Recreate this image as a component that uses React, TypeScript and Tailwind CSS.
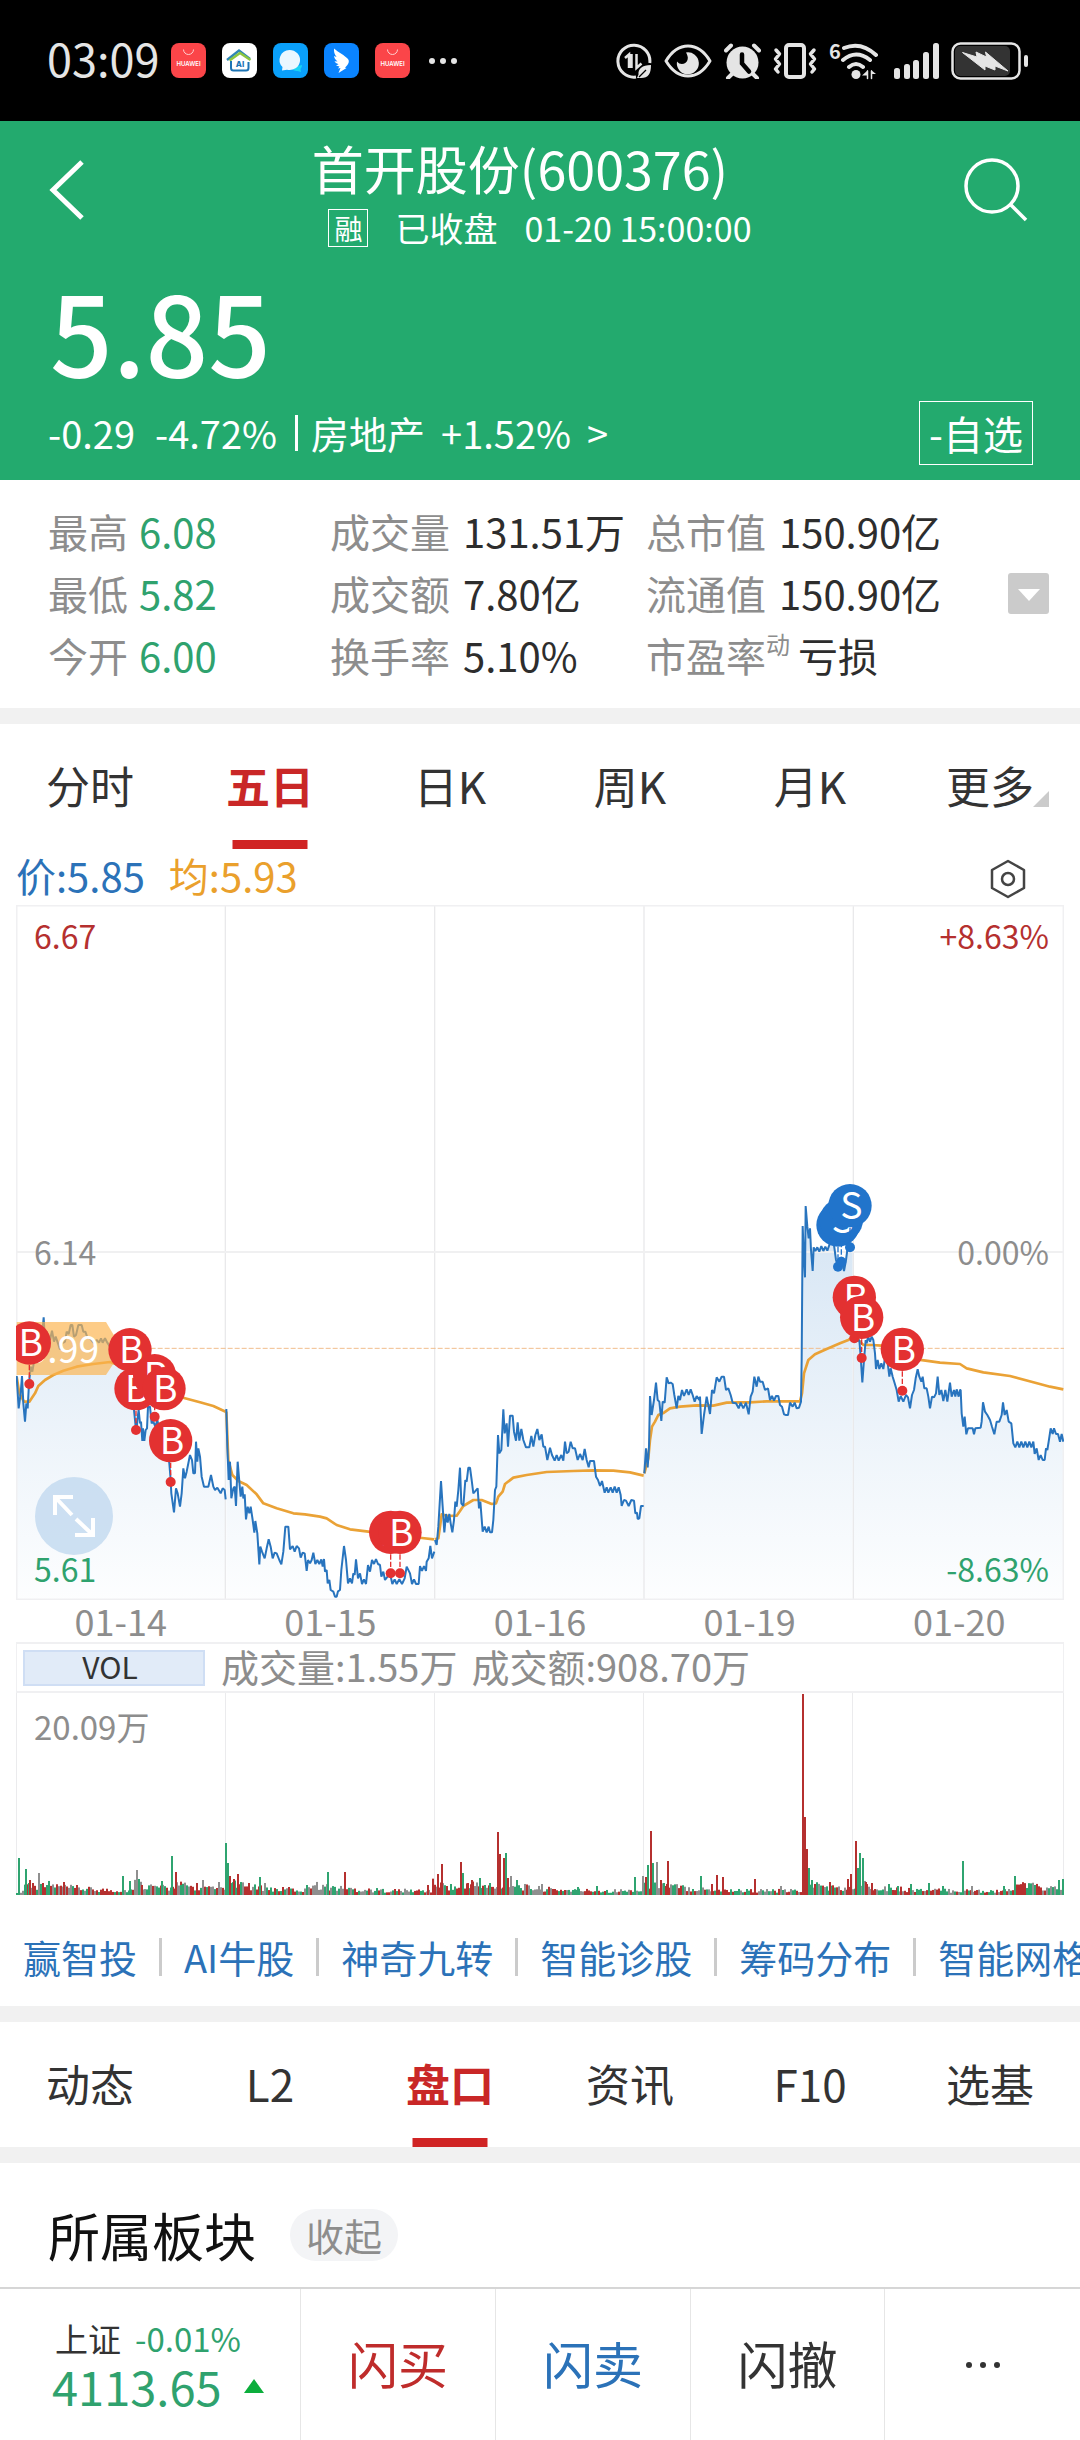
import React from "react";

type Segment = { dx: number; dy: number; pts: string };

/* Price chart space: 3144 x 2085 units, three per CSS pixel. */
const W = 3144;
const H = 2085;

const A = { dx: -48, dy: 1065 };
const B = { dx: 1032, dy: 1425 };
const C = { dx: 2052, dy: 765 };

const priceDays: Segment[][] = [
  [
    {
      ...A,
      pts: "50,348 56,445 62,400 66,348 70,430 75,485 79,430 83,445 87,370 92,320 97,335 103,300 110,290 115,260 122,270 126,230 131,172 134,230 140,215 150,240 156,212 162,245 167,230 174,250 180,268 186,250 195,245 200,215 206,222 212,195 217,195 222,230 228,225 235,195 245,195 250,215 256,215 262,232 270,235 280,248 290,240 297,248 303,235 308,248 315,235 322,248 330,260 345,280 360,270 375,300 390,320 398,350 402,450 405,480 409,520 412,480 416,450 420,490 423,485 427,543 429,505 433,543 437,510 441,505 444,440 450,440 455,490 460,485 466,500 472,480 480,520 490,500 500,560 508,610 512,660 514,700 522,757 528,685 533,700 540,740 545,700 550,625 555,655 560,635 570,585 576,600 580,640 585,640 588,545 592,605 595,565 600,590 605,650 612,680 625,680 633,645 640,680 645,690 652,683 662,700 668,685 674,690 677,718",
    },
  ],
  [
    {
      ...A,
      pts: "679,447 682,560 686,660 690,605 694,715 700,685 704,680 708,738 713,605 718,665 722,710 727,680 730,715 734,703 738,778 743,740 748,760 752,740 758,780 763,818 766,783 772,820 778,913 781,860 786,875 794,895 800,865 806,838 812,860 818,895 824,878 830,880 838,900 844,913 850,875 856,800 865,800 870,868 878,858 884,875 890,858 897,865 902,893 908,878 914,880 920,933 924,900 930,910 935,900 940,878 946,912 952,900 958,912 964,898 968,920 972,897 975,935 980,930 983,970 988,960 992,990 1000,995 1005,1010 1010,1010 1014,994 1020,990 1024,930 1032,858 1038,900 1044,970 1050,955 1056,970 1060,940 1064,945 1068,898 1074,955 1080,940 1086,972 1092,958 1098,972 1104,915 1110,935 1116,900 1122,912 1128,897 1134,912 1140,915 1144,950 1150,935 1155,960 1170,940 1177,972 1184,958 1190,972 1198,958 1206,972 1214,955 1220,920 1230,940 1236,972 1242,958 1248,972 1256,972 1260,918 1266,933 1272,918 1278,933 1280,905 1286,895 1291,858 1296,895 1303,875",
    },
  ],
  [
    {
      ...B,
      pts: "225,480 230,495 235,440 243,303 248,380 253,457 258,402 263,428 268,402 272,430 277,457 282,420 286,365 290,380 295,330 300,263 304,370 310,378 316,300 320,305 325,263 330,263 335,300 340,340 353,325 357,385 361,365 368,455 374,440 380,457 386,440 390,457 396,457 400,420 405,330 409,320 414,165 418,220 424,210 430,88 434,160 440,130 444,200 450,107 458,107 462,155 468,182 473,127 478,182 484,147 490,180 498,202 508,202 514,168 520,200 526,165 532,147 538,180 545,163 550,200 555,200 562,240 570,203 576,225 584,242 590,225 596,242 604,225 610,242 615,185 620,220 626,215 632,185 638,205 645,205 653,240 660,222 668,240 674,207 680,240 686,262 690,243 702,243 708,290 714,300 720,318 726,303 734,338 740,322 745,338 752,322 758,338 764,320 770,338 776,322 782,345 785,378 792,360 798,362 806,378 814,360 822,362 826,400 831,398 833,417 838,415 843,378 851,378",
    },
  ],
  [
    {
      ...B,
      pts: "853,280 858,205 863,262 867,200 870,48 875,105 882,60 888,8 893,60 898,65 904,123 908,65 914,68 920,-8 926,10 932,8 938,12 943,45 950,85 955,48 960,60 966,30 972,48 980,28 986,45 992,28 998,45 1004,65 1010,48 1018,60",
    },
    {
      ...C,
      pts: "0,710 5,822 12,765 20,710 30,762 36,690 42,700 50,652 58,665 65,650 72,650 78,690 85,685 92,705 98,728 108,730 116,745 122,728 130,745 138,728 146,763 152,710 158,695 163,650 170,680 175,650 180,665 188,665 195,690 204,685 210,720 216,708 222,722 228,708 235,708 240,735 246,740 252,763 258,765 264,765 270,728 278,740 284,728 290,745 297,743 303,725 305,600 308,198 312,300 315,352 317,138 322,200 326,235 330,205 333,270 338,333 341,262 346,273 352,262 358,275 364,258 370,273 376,260 382,272 388,255 395,240 402,255 408,300 414,320 420,320 426,300 432,333 438,300 443,262 450,255 458,262",
    },
  ],
  [
    {
      ...C,
      pts: "460,520 466,545 478,540 482,590 487,667 492,600 497,540 500,550 504,530 510,545 515,530 520,540 525,580 528,627 533,600 538,627 544,610 550,627 556,585 562,600 568,650 572,625 578,650 584,670 590,690 596,725 602,708 610,725 618,705 624,712 630,745 636,705 642,690 647,655 653,628 658,650 664,665 668,650 673,685 680,685 685,710 690,745 696,710 702,712 708,700 713,650 718,705 724,690 730,723 736,690 742,725 750,668 755,710 762,690 766,710 770,688 776,710 780,690 782,690 785,760 790,800 794,770 799,823 804,805 818,805 822,823 826,805 842,803 845,785 849,727 855,755 862,765 870,780 876,800 883,823 890,785 898,785 905,765 909,727 914,765 920,750 926,785 934,790 940,850 946,862 952,845 958,862 964,845 970,862 976,845 982,862 988,845 994,862 1000,845 1004,882 1010,865 1016,900 1022,885 1028,900 1034,900 1038,865 1042,870 1046,845 1052,805 1058,822 1062,805 1068,822 1074,822 1080,845 1085,822 1090,845",
    },
  ],
];

const averageDays: Segment[][] = [
  [{ ...A, pts: "50,350 58,400 72,425 88,425 105,400 115,378 135,360 160,345 190,332 230,320 280,312 330,306 400,330 450,370 500,400 555,415 600,427 640,438 677,455" }],
  [{ ...A, pts: "679,455 685,600 697,645 715,663 740,675 770,703 790,730 830,745 880,760 915,763 960,770 980,775 1010,795 1050,808 1105,815 1180,825 1266,834 1302,838" }],
  [{ ...B, pts: "225,478 235,475 240,440 245,403 265,408 290,407 300,393 310,378 340,360 365,360 395,372 408,370 415,350 428,335 435,312 460,293 500,285 560,276 640,273 700,271 760,272 810,277 851,287" }],
  [
    { ...B, pts: "853,280 865,235 870,180 876,140 885,125 895,105 912,98 930,85 960,80 1010,76" },
    { ...C, pts: "40,737 80,728 120,727 150,727 200,724 300,724 306,700 312,640 325,600 345,583 380,567 420,550 445,540 458,530" },
  ],
  [{ ...C, pts: "460,525 480,545 490,555 515,555 545,557 600,585 650,598 720,608 780,612 800,625 850,637 930,648 1000,667 1050,680 1090,688" }],
];

const toPoints = (day: Segment[]): [number, number][] =>
  day.flatMap((s) =>
    s.pts.split(" ").map((p) => {
      const [x, y] = p.split(",").map(Number);
      return [x + s.dx, y + s.dy] as [number, number];
    }),
  );

const linePath = (pts: [number, number][]) => "M" + pts.map((p) => p.join(" ")).join("L");
const areaPath = (pts: [number, number][]) =>
  `${linePath(pts)}L${pts[pts.length - 1][0]} ${H}L${pts[0][0]} ${H}Z`;

type Mark = { x: number; y: number; t: "B" | "S"; dotY?: number };

const marks: Mark[] = [
  { x: 40, y: 1314, t: "B", dotY: 1437 },
  { x: 342, y: 1334, t: "B" },
  { x: 360, y: 1451, t: "B", dotY: 1575 },
  { x: 416, y: 1412, t: "B", dotY: 1535 },
  { x: 444, y: 1451, t: "B" },
  { x: 464, y: 1607, t: "B", dotY: 1731 },
  { x: 1124, y: 1882, t: "B", dotY: 2005 },
  { x: 1152, y: 1882, t: "B", dotY: 2005 },
  { x: 2466, y: 960, t: "S", dotY: 1085 },
  { x: 2476, y: 945, t: "S", dotY: 1070 },
  { x: 2502, y: 902, t: "S", dotY: 1027 },
  { x: 2515, y: 1177, t: "B", dotY: 1300 },
  { x: 2537, y: 1237, t: "B", dotY: 1359 },
  { x: 2659, y: 1333, t: "B", dotY: 1457 },
];

function PriceChart() {
  const red = "#e33131";
  const blue = "#2174cb";
  const cols = [628, 1256, 1884, 2512];
  return (
    <svg viewBox={`0 0 ${W} ${H}`} className="block h-auto w-full overflow-hidden" role="img" aria-label="五日走势图">
      <defs>
        <linearGradient id="area" gradientUnits="userSpaceOnUse" x1="0" y1="900" x2="0" y2={H}>
          <stop offset="0" stopColor="#2a7ac6" stopOpacity="0.2" />
          <stop offset="0.6" stopColor="#2a7ac6" stopOpacity="0.08" />
          <stop offset="1" stopColor="#2a7ac6" stopOpacity="0.01" />
        </linearGradient>
      </defs>
      {priceDays.map((d, i) => (
        <path key={i} d={areaPath(toPoints(d))} fill="url(#area)" />
      ))}
      <g stroke="#e9e9eb" strokeWidth="4" fill="none">
        {cols.map((x) => (
          <path key={x} d={`M${x} 0V${H}`} />
        ))}
        <path d={`M0 1041H${W}`} stroke="#f0f0f1" strokeWidth="6" />
        <rect x="2" y="2" width={W - 4} height={H - 4} stroke="#f0f0f2" strokeWidth="5" />
      </g>
      <path d={`M320 1330H${W}`} stroke="#f1bd8c" strokeWidth="3" strokeDasharray="15 6" />
      {averageDays.map((d, i) => (
        <path key={i} d={linePath(toPoints(d))} fill="none" stroke="#eaa236" strokeWidth="8" strokeLinejoin="round" />
      ))}
      {priceDays.map((d, i) => (
        <path key={i} d={linePath(toPoints(d))} fill="none" stroke="#2874be" strokeWidth="6" strokeLinejoin="bevel" />
      ))}
      <path d="M2 1251H270L295 1293V1372L270 1410H2Z" fill="#fcb44e" fillOpacity="0.68" />
      <text x="32" y="1375" fontSize="112" fill="#fff">
        5.99
      </text>
      {marks.map((m, i) => {
        const color = m.t === "B" ? red : blue;
        return (
          <g key={i}>
            {m.dotY && (
              <>
                <path d={`M${m.x} ${m.y}V${m.dotY}`} stroke={color} strokeWidth="4" strokeDasharray="16 6" />
                <circle cx={m.x} cy={m.dotY} r="15" fill={color} />
              </>
            )}
            <circle cx={m.x} cy={m.y} r="65" fill={color} />
            <text x={m.x + 4} y={m.y + 40} fontSize="112" textAnchor="middle" fill="#fff">
              {m.t}
            </text>
          </g>
        );
      })}
    </svg>
  );
}

const GREEN = "#2fa470";
const RED = "#b5302f";
const GREY = "#8f8f8f";

const spikes: [number, number, string][] = (
  "18,37,g 25,26,g 29,15,r 32,12,r 38,22,e 42,12,r 63,13,r 76,10,r 122,19,g 129,14,g 136,25,e 138,16,g 141,10,r 161,14,g 171,39,g 175,23,r 180,10,g 196,12,r 202,15,e 218,13,e 225,52,g 227,32,g 229,19,r 233,16,r 237,21,r 248,12,r 259,18,g 264,12,e 282,8,r 288,8,r 306,10,g 327,23,g 344,23,r 427,10,r 437,21,r 441,31,r 446,9,r 460,33,r 462,22,g 467,12,r 471,15,r 479,17,g 484,10,g 489,12,g 497,63,r 499,41,r 503,37,r 505,42,g 507,17,r 510,19,e 516,15,g 541,11,e 577,8,g 596,9,g 634,18,g 642,19,e 645,18,r 647,30,g 650,64,r 652,32,g 656,33,e 660,15,r 663,12,g 667,34,r 700,19,g 711,11,r 716,20,r 722,18,r 754,16,r 780,9,e 802,201,r 804,78,r 806,46,r 808,27,g 811,15,g 814,11,r 829,13,r 847,16,r 850,21,r 855,54,r 857,27,g 859,42,g 862,37,g 865,13,r 871,12,r 888,11,g 897,9,g 910,11,g 928,12,g 942,9,g 962,34,g 971,9,e 1003,9,g 1014,19,g 1034,10,g 1058,15,g 1062,16,g"
)
  .split(" ")
  .map((s) => {
    const [x, h, c] = s.split(",");
    return [Number(x) - 16, Number(h), c === "g" ? GREEN : c === "r" ? RED : GREY];
  });

const busy = [8, 25, 118, 155, 212, 290, 415, 450, 485, 625, 640, 790, 840, 1000];

/* Small per-minute bars between the large ones, tallest near busy minutes. */
const noise: [number, number, string][] = Array.from({ length: 524 }, (_, i) => {
  const x = i * 2;
  const r = Math.abs(Math.sin(i * 12.9898) * 43758.5453) % 1;
  const q = Math.abs(Math.sin(i * 78.233) * 12543.123) % 1;
  const lift = busy.reduce((m, b) => (x >= b ? Math.max(m, 11 * Math.exp(-(x - b) / 30)) : m), 0);
  return [x, 2 + r * 4 + lift * (0.4 + r * 0.6), q < 0.36 ? GREEN : q < 0.68 ? RED : GREY];
});

function VolumeChart() {
  return (
    <svg viewBox="0 0 1048 202" className="block h-auto w-full" role="img" aria-label="成交量图">
      <g fill="#ebebed">
        {[0, 209, 418, 627, 836, 1047].map((x) => (
          <rect key={x} x={x} y="0" width="1" height="202" />
        ))}
      </g>
      {noise.map(([x, h, c], i) => (
        <rect key={i} x={x} y={202 - h} width="2" height={h} fill={c} />
      ))}
      {spikes.map(([x, h, c], i) => (
        <rect key={i} x={x} y={202 - h} width="2" height={h} fill={c} />
      ))}
    </svg>
  );
}

function HuaweiIcon() {
  return (
    <svg viewBox="0 0 35 35" className="size-[35px]" aria-hidden="true">
      <rect width="35" height="35" rx="8" fill="#fb4549" />
      <path d="M12.500 6.500a5 5 0 0 0 10 0" fill="none" stroke="#ffd0d0" strokeWidth="1" />
      <text x="17.500" y="23" fontSize="6" fontWeight="600" textAnchor="middle" fill="#fff" fontFamily="Inter, sans-serif">
        HUAWEI
      </text>
    </svg>
  );
}

function StatusBar() {
  const c = "#e5e5e5";
  return (
    <div className="flex h-[121px] items-center justify-between bg-black pl-[47px] pr-[52px] text-[#e5e5e5]">
      <div className="flex items-center gap-4">
        <span className="-mr-1 pb-[5px] text-[45px] leading-[50px]">03:09</span>
        <HuaweiIcon />
        <svg viewBox="0 0 35 35" className="size-[35px]" aria-hidden="true">
          <rect width="35" height="35" rx="8" fill="#fff" />
          <path d="M5 17 17 7.500 28 16" fill="none" stroke="#2f86b5" strokeWidth="2.500" />
          <path d="M7.500 17.500 18 10l10.500 7" fill="none" stroke="#8cc63f" strokeWidth="2.500" />
          <path d="M9 18v7q0 2.500 2.500 2.500H24q2.500 0 2.500-2.500v-6" fill="none" stroke="#1d74b4" strokeWidth="2" />
          <text x="18" y="24" fontSize="8" fontWeight="800" textAnchor="middle" fill="#1d74b4" fontFamily="Inter, sans-serif">
            AI
          </text>
        </svg>
        <svg viewBox="0 0 35 35" className="size-[35px]" aria-hidden="true">
          <rect width="35" height="35" rx="8" fill="#0aa0fb" />
          <path d="M29 22a5.500 5.500 0 0 1-1.500 4l.5 3-3.500-1a6 6 0 0 1-6-3.500z" fill="#18d3f5" />
          <path d="M16.500 7a10.500 10 0 1 1-2.500 19.700L9 27.500l.5-3.500A10.300 10 0 0 1 16.500 7Z" fill="#eaf7ff" />
        </svg>
        <svg viewBox="0 0 35 35" className="size-[35px]" aria-hidden="true">
          <rect width="35" height="35" rx="8" fill="#0a84ff" />
          <path d="M10 5.500c4 3.500 11 7 14 10.500 1.500 2 .8 3.800-.6 6l-2.400 2.800 1.500.3-8 5 2-5-2.500.3 1.500-2-3.500-1 2.500-1.200c-2-.8-3.500-1.800-4-3l3 .3c-2.300-2-3.300-3.800-3.500-5.500l2.600 1C10.500 11.500 9.700 8.500 10 5.500Z" fill="#fff" />
        </svg>
        <HuaweiIcon />
        <svg viewBox="0 0 32 8" className="h-2 w-8" fill={c} aria-hidden="true">
          <circle cx="6" cy="4" r="3" />
          <circle cx="17" cy="4" r="3" />
          <circle cx="28" cy="4" r="3" />
        </svg>
      </div>
      <div className="flex items-center gap-3" aria-hidden="true">
        <svg viewBox="0 0 36 36" className="size-9" fill="none" stroke={c} strokeWidth="3">
          <path d="M20 34A16 16 0 1 1 33.800 20" />
          <path d="M9 15l4-3.500V25M15.500 11v14" strokeWidth="2.500" />
          <path d="M20.500 11v14l5-4.500" strokeWidth="2.500" />
          <path d="M35 22c-9 0-13 4-12.500 9.500L21 35h3c8 .5 11-4 11-13Z" fill={c} stroke="none" />
          <path d="m23 34 7-7" stroke="#000" strokeWidth="1.300" />
        </svg>
        <svg viewBox="0 0 48 34" className="h-[34px] w-12" fill="none" stroke={c} strokeWidth="3">
          <path d="M2 17C8 7 16 2 24 2s16 5 22 15c-6 10-14 15-22 15S8 27 2 17Z" strokeLinejoin="round" />
          <path d="M22 8.500a11 11 0 1 1-9 9c3 4 9 3 10.500-1.500 1-3-.5-5.500-1.500-7.500Z" fill={c} stroke="none" />
        </svg>
        <svg viewBox="0 0 37 36" className="h-9 w-[37px]" fill={c} stroke={c}>
          <circle cx="18.500" cy="19.500" r="16" stroke="none" />
          <path d="M2 7.500 7 2.500M35 7.500l-5-5M8 31l-4 4M29 31l4 4" strokeWidth="4" strokeLinecap="round" fill="none" />
          <path d="M18 11.500v9l7 8" stroke="#000" strokeWidth="4.500" strokeLinecap="round" fill="none" />
        </svg>
        <svg viewBox="0 0 44 36" className="h-9 w-11" fill="none" stroke={c} strokeWidth="4" strokeLinejoin="round">
          <rect x="13" y="2" width="18" height="32" rx="3" />
          <path d="m3 7 3.500 4L2.500 16l4 5-4 5L5 29M41 7l-3.500 4 4 5-4 5 4 5-2.500 3" strokeWidth="3.500" strokeLinecap="round" />
        </svg>
        <svg viewBox="0 0 53 38" className="h-[38px] w-[53px]" fill="none" stroke={c} strokeWidth="4" strokeLinecap="round">
          <text x="0" y="17" fontSize="20" fill={c} stroke="none" fontWeight="700">
            6
          </text>
          <path d="M15 6q17-7 32 7M14 18q13-11 27 0M20 25q7-6 14 0" />
          <circle cx="27" cy="32.500" r="4.500" fill={c} stroke="none" />
          <path d="M33 33.500h6V28ZM38 28v9M42 37v-9l5 4h-5" fill={c} stroke="none" />
          <path d="M38.500 29v7.500M42.500 29v7.500" strokeWidth="1.500" />
        </svg>
        <svg viewBox="0 0 45 36" className="h-9 w-[45px]" fill={c}>
          <rect x="0" y="25" width="6" height="11" rx="2.500" />
          <rect x="10" y="21" width="6" height="15" rx="2.500" />
          <rect x="19" y="17" width="6" height="19" rx="2.500" />
          <rect x="29" y="9" width="6" height="27" rx="2.500" />
          <rect x="39" y="0" width="6" height="36" rx="2.500" />
        </svg>
        <svg viewBox="0 0 77 38" className="h-[38px] w-[77px]">
          <rect x="1.500" y="1.500" width="67" height="35" rx="8" fill="none" stroke={c} strokeWidth="2.500" />
          <rect x="4" y="4" width="55" height="30" rx="5" fill="#333" />
          <path d="M11.500 10.500 26 15l-1-5 10.500 5-1-5L57 29l-13-5v4l-10-4v4Z" fill={c} stroke={c} strokeWidth="1" strokeLinejoin="round" />
          <rect x="73" y="13" width="4" height="12" rx="2" fill={c} />
        </svg>
      </div>
    </div>
  );
}

function Header() {
  return (
    <header className="bg-[#23aa6e] pb-[15px] pt-[15px] text-white">
      <div className="flex items-center justify-between px-[48px]">
        <button aria-label="返回" className="mb-2">
          <svg viewBox="0 0 68 60" className="h-[60px] w-[68px]" fill="none" stroke="#fff" strokeWidth="5">
            <path d="M34 2 5 30l29 28" />
          </svg>
        </button>
        <div className="flex flex-col items-center">
          <h1 className="pr-10 text-[52px] leading-[64px]">首开股份(600376)</h1>
          <p className="mt-1 flex items-center text-[34px] leading-[48px]">
            <span className="flex h-[38px] items-center border border-white px-[5px] text-[28px] leading-[36px]">融</span>
            <span className="ml-[27px]">已收盘</span>
            <span className="ml-[27px]">01-20 15:00:00</span>
          </p>
        </div>
        <button aria-label="搜索" className="mb-2">
          <svg viewBox="0 0 68 64" className="h-16 w-[68px]" fill="none" stroke="#fff" strokeWidth="3.500">
            <circle cx="28" cy="28" r="26" />
            <path d="m47 47 15 15" />
          </svg>
        </button>
      </div>
      <p className="mt-[19px] px-[50px] text-[110px] font-medium leading-[116px]">5.85</p>
      <div className="mt-[14px] flex h-16 items-center justify-between pl-12 pr-[47px] text-[38px] leading-[48px]">
        <div className="flex items-center">
          <span>-0.29</span>
          <span className="ml-5">-4.72%</span>
          <span className="ml-[18px] mr-[13px] h-9 w-[3px] bg-white" />
          <a href="#sector" className="flex gap-4">
            <span>房地产</span>
            <span>+1.52%</span>
            <span>&gt;</span>
          </a>
        </div>
        <button className="h-16 border border-white px-[9px] text-[40px] leading-[54px]">-自选</button>
      </div>
    </header>
  );
}

function Stat({ label, sup, value, green }: { label: string; sup?: string; value: string; green?: boolean }) {
  return (
    <div className="flex whitespace-nowrap">
      <dt className="flex text-[#8d8d8d]">
        {label}
        {sup && <span className="text-[24px] leading-[40px]">{sup}</span>}
      </dt>
      <dd className={green ? "ml-[11px] text-[#2fa26e]" : sup ? "ml-[8px] text-[#2d2d2d]" : "ml-[13px] text-[#2d2d2d]"}>{value}</dd>
    </div>
  );
}

function Stats() {
  return (
    <section className="flex items-center bg-white pb-[22px] pl-12 pr-[31px] pt-5">
      <dl className="grid flex-1 grid-cols-[282fr_316fr_362fr] text-[40px] leading-[62px]">
        <Stat label="最高" value="6.08" green />
        <Stat label="成交量" value="131.51万" />
        <Stat label="总市值" value="150.90亿" />
        <Stat label="最低" value="5.82" green />
        <Stat label="成交额" value="7.80亿" />
        <Stat label="流通值" value="150.90亿" />
        <Stat label="今开" value="6.00" green />
        <Stat label="换手率" value="5.10%" />
        <Stat label="市盈率" sup="动" value="亏损" />
      </dl>
      <button aria-label="展开" className="flex size-[41px] items-center justify-center rounded-[3px] bg-[#cbcbcb]">
        <svg viewBox="0 0 22 12" className="mt-1 h-3 w-[22px]" fill="#fff">
          <path d="M0 0h22L11 12z" />
        </svg>
      </button>
    </section>
  );
}

function Tabs({ items, active, more, label }: { items: string[]; active: number; more?: boolean; label: string }) {
  return (
    <nav aria-label={label} className="grid h-[125px] grid-cols-6 bg-white text-[44px] leading-[60px]">
      {items.map((t, i) => (
        <button
          key={t}
          aria-current={i === active}
          className={
            i === active
              ? "relative flex items-center justify-center pb-[3px] font-bold text-[#c92727]"
              : "relative flex items-center justify-center pb-[3px] text-[#333]"
          }
        >
          {t}
          {i === active && <span className="absolute bottom-0 left-1/2 h-[9px] w-[75px] -translate-x-1/2 bg-[#d02424]" />}
          {more && i === items.length - 1 && (
            <svg viewBox="0 0 16 16" className="absolute bottom-[42px] right-[31px] size-4" fill="#cbcbcb" aria-hidden="true">
              <path d="M16 0v16H0z" />
            </svg>
          )}
        </button>
      ))}
    </nav>
  );
}

function ChartPanel() {
  return (
    <section className="bg-white px-4 text-[#8d8d8d]">
      <div className="flex h-14 items-center justify-between pr-9 text-[40px] leading-[54px]">
        <div className="flex gap-6 pb-1">
          <span className="text-[#2b72b8]">价:5.85</span>
          <span className="text-[#eaa02c]">均:5.93</span>
        </div>
        <button aria-label="设置" className="mt-1">
          <svg viewBox="0 0 40 40" className="size-10" fill="none" stroke="#444" strokeWidth="2.500">
            <path d="M20 2 36 11v18L20 38 4 29V11Z" strokeLinejoin="round" />
            <circle cx="20" cy="20" r="6" />
          </svg>
        </button>
      </div>
      <div className="relative text-[32px] leading-[40px]">
        <PriceChart />
        <span className="absolute left-[18px] top-[10px] text-[#b5302f]">6.67</span>
        <span className="absolute right-[15px] top-[10px] text-[#b5302f]">+8.63%</span>
        <span className="absolute left-[18px] top-[326px]">6.14</span>
        <span className="absolute right-[15px] top-[326px]">0.00%</span>
        <button
          aria-label="全屏"
          className="absolute bottom-[45px] left-[19px] flex size-[78px] items-center justify-center rounded-full bg-[#c4daf0]/85"
        >
          <svg viewBox="0 0 42 42" className="size-[42px]" fill="none" stroke="#fff" strokeWidth="4">
            <path d="M2 20V2h18M2 2l17 18M40 23v17H22M40 40 23 24" />
          </svg>
        </button>
        <span className="absolute bottom-[12px] left-[18px] text-[#2fa26e]">5.61</span>
        <span className="absolute bottom-[12px] right-[15px] text-[#2fa26e]">-8.63%</span>
      </div>
      <div className="grid h-[42px] grid-cols-5 text-center text-[36px] leading-[40px]">
        {["01-14", "01-15", "01-16", "01-19", "01-20"].map((d) => (
          <span key={d}>{d}</span>
        ))}
      </div>
      <div className="flex h-[51px] items-center border-x border-y-2 border-[#f0f0f2] pl-[6px] text-[38px] leading-[46px]">
        <button className="h-9 w-[182px] border-2 border-[#cfdef4] bg-[#e1ebf8] pb-1 pr-2 text-[30px] leading-[28px] text-[#333]">VOL</button>
        <span className="ml-4 pb-1">成交量:1.55万</span>
        <span className="ml-[14px] pb-1">成交额:908.70万</span>
      </div>
      <div className="relative">
        <VolumeChart />
        <span className="absolute left-[18px] top-[12px] text-[33px] leading-[42px]">20.09万</span>
      </div>
    </section>
  );
}

function Links() {
  const items = ["赢智投", "AI牛股", "神奇九转", "智能诊股", "筹码分布", "智能网格"];
  return (
    <nav aria-label="工具" className="flex h-[111px] items-center overflow-hidden whitespace-nowrap bg-white pl-[23px] pt-[13px] text-[38px] leading-[48px] text-[#2b72b8]">
      {items.map((t, i) => (
        <React.Fragment key={t}>
          {i > 0 && <span className="mx-[22px] h-[38px] w-[3px] shrink-0 bg-[#cbcbcb]" />}
          <a href={`#tool-${i}`} className="shrink-0">
            {t}
          </a>
        </React.Fragment>
      ))}
    </nav>
  );
}

function BottomBar() {
  return (
    <footer className="grid h-[153px] grid-cols-[301fr_195fr_195fr_194fr_195fr] border-t-2 border-[#d6d6d6] bg-white text-[50px] leading-[60px] text-[#333]">
      <a href="#index" className="flex flex-col justify-center border-r border-[#e6e6e6] pb-[2px] pl-[52px]">
        <span className="flex gap-[14px] pl-[3px] text-[33px] leading-[44px]">
          <span>上证</span>
          <span className="text-[#2fa26e]">-0.01%</span>
        </span>
        <span className="flex items-center gap-[22px] text-[47px] leading-[52px] text-[#2fa26e]">
          4113.65
          <svg viewBox="0 0 20 14" className="h-[14px] w-5" fill="#0cae3c" aria-hidden="true">
            <path d="M10 0 20 14H0z" />
          </svg>
        </span>
      </a>
      <button className="border-r border-[#e6e6e6] pb-[6px] text-[#bf2c2b]">闪买</button>
      <button className="border-r border-[#e6e6e6] pb-[6px] text-[#2b72b8]">闪卖</button>
      <button className="border-r border-[#e6e6e6] pb-[6px]">闪撤</button>
      <button aria-label="更多操作" className="flex items-center justify-center">
        <svg viewBox="0 0 38 8" className="h-2 w-[38px]" fill="#333">
          <circle cx="5" cy="4" r="3" />
          <circle cx="19" cy="4" r="3" />
          <circle cx="33" cy="4" r="3" />
        </svg>
      </button>
    </footer>
  );
}

export default function App() {
  return (
    <main lang="zh-CN" className="flex flex-col gap-4 overflow-hidden bg-[#f1f1f1] font-['Noto_Sans_CJK_SC','Liberation_Sans',sans-serif]">
      <div>
        <StatusBar />
        <Header />
        <Stats />
      </div>
      <div>
        <Tabs label="周期" items={["分时", "五日", "日K", "周K", "月K", "更多"]} active={1} more />
        <ChartPanel />
        <Links />
      </div>
      <Tabs label="详情" items={["动态", "L2", "盘口", "资讯", "F10", "选基"]} active={2} />
      <div>
        <section id="sector" className="flex h-[124px] items-center gap-[34px] bg-white pl-12 pt-5">
          <h2 className="text-[52px] leading-[64px] text-[#111]">所属板块</h2>
          <button className="h-[52px] rounded-full bg-[#f3f4f6] px-4 text-[38px] leading-[48px] text-[#8d8d8d]">收起</button>
        </section>
        <BottomBar />
      </div>
    </main>
  );
}
